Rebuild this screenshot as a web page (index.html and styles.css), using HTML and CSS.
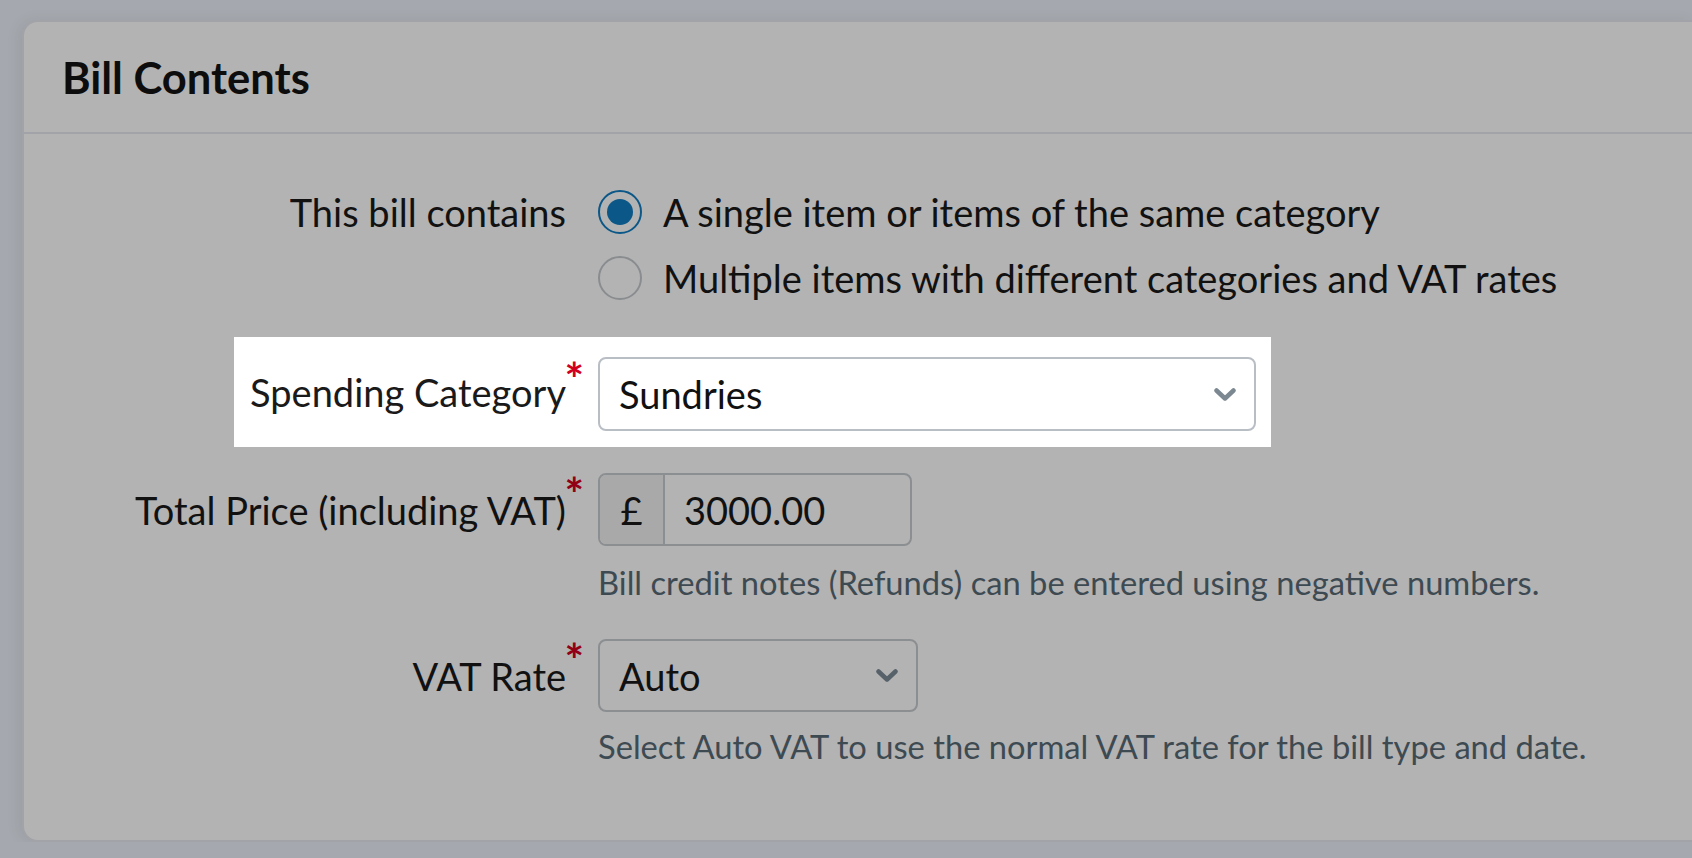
FILE: index.html
```html
<!DOCTYPE html>
<html lang="en">
<head>
<meta charset="UTF-8">
<meta name="viewport" content="width=device-width, initial-scale=1.0">
<title>Bill Contents</title>
<link rel="stylesheet" href="styles.css">
</head>
<body>
<div class="panel">
    <div class="panel-head">
        <h2 class="panel-title">Bill Contents</h2>
    </div>
    <div class="panel-body">
        <div class="row row-radio">
            <div class="label-cell"><span class="label">This bill contains</span></div>
            <div class="control-cell">
                <label class="radio-opt"><span class="radio checked"></span>A single item or items of the same category</label>
                <label class="radio-opt"><span class="radio"></span>Multiple items with different categories and VAT rates</label>
            </div>
        </div>

        <div class="row row-spot">
            <div class="label-cell"><span class="label spot-label">Spending Category<span class="req">*</span></span></div>
            <div class="control-cell spot-control">
                <div class="select select-wide">
                    <span>Sundries</span>
                    <svg class="chev" width="22" height="13" viewBox="0 0 22 13"><path d="M2.5 2.5 L11 10.5 L19.5 2.5" fill="none" stroke="#7c8891" stroke-width="4.5" stroke-linecap="round" stroke-linejoin="round"/></svg>
                </div>
            </div>
        </div>

        <div class="row row-price">
            <div class="label-cell"><span class="label">Total Price (including VAT)<span class="req">*</span></span></div>
            <div class="control-cell">
                <div class="input-group">
                    <span class="addon">£</span>
                    <span class="input-val">3000.00</span>
                </div>
                <p class="help">Bill credit notes (Refunds) can be entered using negative numbers.</p>
            </div>
        </div>

        <div class="row row-vat">
            <div class="label-cell"><span class="label">VAT Rate<span class="req">*</span></span></div>
            <div class="control-cell">
                <div class="select select-dim">
                    <span>Auto</span>
                    <svg class="chev" width="22" height="13" viewBox="0 0 22 13"><path d="M2.5 2.5 L11 10.5 L19.5 2.5" fill="none" stroke="#56616a" stroke-width="4.5" stroke-linecap="round" stroke-linejoin="round"/></svg>
                </div>
                <p class="help help-vat">Select Auto VAT to use the normal VAT rate for the bill type and date.</p>
            </div>
        </div>
    </div>
</div>
</body>
</html>
```

FILE: styles.css
```css
body {
    margin: 0;
    background: #a5a8ae;
    font-family: Lato, "Noto Sans", sans-serif;
    color: #111;
    overflow: hidden;
}
.panel {
    margin: 20px 0 0 22px;
    height: 818px;
    background: #b3b3b3;
    border: 2px solid #a2a3a8;
    border-right: none;
    border-radius: 16px 0 0 16px;
    box-shadow: -4px 0 14px rgba(0, 0, 0, 0.06);
}
.panel-head {
    height: 110px;
    display: flex;
    align-items: center;
    padding-left: 38px;
    border-bottom: 2px solid #a2a3a8;
}
.panel-title {
    margin: 0;
    font-size: 43.5px;
    font-weight: 700;
    color: #0d0d0d;
}
.panel-body {
    padding-top: 45px;
}
.row {
    display: grid;
    grid-template-columns: 559px auto;
    font-size: 38px;
}
.label-cell {
    display: flex;
    justify-content: flex-end;
    align-items: center;
}
.label {
    position: relative;
    padding-right: 17px;
    white-space: nowrap;
}
.req {
    position: absolute;
    right: -1px;
    top: -21px;
    font-weight: 700;
    font-size: 46px;
    line-height: 1.2;
    color: #920013;
}
.control-cell {
    padding-left: 15px;
}

/* radios */
.row-radio .label-cell {
    align-items: flex-start;
    line-height: 66px;
}
.radio-opt {
    display: flex;
    align-items: center;
    height: 66px;
    white-space: nowrap;
}
.radio {
    width: 40px;
    height: 40px;
    border: 2px solid #8a8d90;
    border-radius: 50%;
    margin-right: 21px;
    box-sizing: content-box;
    flex: none;
    position: relative;
}
.radio.checked {
    border-color: #0b5788;
}
.radio.checked::after {
    content: "";
    position: absolute;
    left: 7px;
    top: 7px;
    width: 26px;
    height: 26px;
    border-radius: 50%;
    background: #0b5788;
}

/* highlighted row */
.row-spot {
    margin-top: 26px;
    height: 110px;
}
.row-spot .label-cell {
    align-items: stretch;
}
.spot-label {
    display: flex;
    align-items: center;
    background: #fff;
    padding-left: 16px;
    color: #1a1a1a;
}
.spot-label .req {
    top: 14px;
    color: #d0021b;
}
.spot-control {
    background: #fff;
    width: 658px;
    padding: 20px 15px 16px 15px;
}

.select {
    box-sizing: border-box;
    height: 74px;
    display: flex;
    align-items: center;
    justify-content: space-between;
    padding: 0 18px 0 19px;
    border: 2px solid #b8bec4;
    border-radius: 8px;
    background: #fff;
}
.select-wide {
    width: 658px;
}
.select-dim {
    width: 320px;
    height: 73px;
    background: #b3b3b3;
    border-color: #8c8f92;
}

/* price */
.row-price {
    margin-top: 26px;
}
.row-price .label-cell,
.row-vat .label-cell {
    align-items: center;
    height: 73px;
}
.input-group {
    box-sizing: border-box;
    display: flex;
    width: 314px;
    height: 73px;
    border: 2px solid #8c8f92;
    border-radius: 8px;
    overflow: hidden;
}
.addon {
    width: 63px;
    display: flex;
    align-items: center;
    justify-content: center;
    background: #a9a9a9;
    border-right: 2px solid #8c8f92;
}
.input-val {
    display: flex;
    align-items: center;
    padding-left: 19px;
}
.help {
    margin: 17px 0 0;
    font-size: 32.7px;
    line-height: 40px;
    color: #3e4a52;
    white-space: nowrap;
}
.row-vat {
    margin-top: 36px;
}
.help-vat {
    margin-top: 15px;
}
```
